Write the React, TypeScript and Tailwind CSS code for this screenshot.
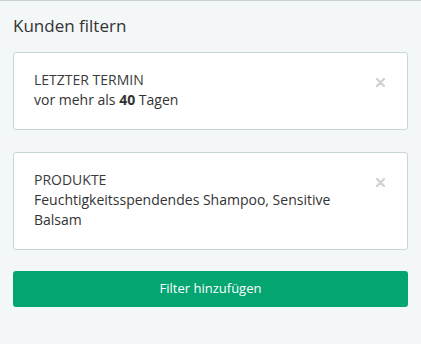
const filters = [
  {
    label: "LETZTER TERMIN",
    value: (
      <>
        vor mehr als <span className="font-bold">40</span> Tagen
      </>
    ),
  },
  {
    label: "PRODUKTE",
    value: <>Feuchtigkeitsspendendes Shampoo, Sensitive Balsam</>,
  },
];

const CloseIcon = () => (
  <svg width="9" height="9" viewBox="0 0 9 9" className="shrink-0">
    <path
      d="M1 1 L8 8 M8 1 L1 8"
      stroke="#d2d2d2"
      strokeWidth="2.4"
      strokeLinecap="round"
    />
  </svg>
);

export default function App() {
  return (
    <div
      className="w-[421px] h-[344px] bg-[#f4f7f8] border-t border-[#c5d0d3] px-[13px] pt-[13px] text-[#333333]"
      style={{ fontFamily: '"Open Sans", "Liberation Sans", sans-serif' }}
    >
      <h2 className="text-[17px] leading-[24px] mb-[14px]">Kunden filtern</h2>

      <div className="flex flex-col gap-[22px]">
        {filters.map((f) => (
          <div
            key={f.label}
            className="flex items-start bg-white border border-[#c8d6da] rounded-[3px] pl-[20px] pr-[22px] pt-[17px] pb-[19px]"
          >
            <div className="flex-1 pr-[30px] text-[14px] leading-[20px]">
              <div className="text-[#3a3a3a]">{f.label}</div>
              <div>{f.value}</div>
            </div>
            <div className="mt-[8px]">
              <CloseIcon />
            </div>
          </div>
        ))}
      </div>

      <button className="mt-[21px] w-full h-[36px] bg-[#04a570] rounded-[3px] text-white text-[13px]">
        Filter hinzufügen
      </button>
    </div>
  );
}
